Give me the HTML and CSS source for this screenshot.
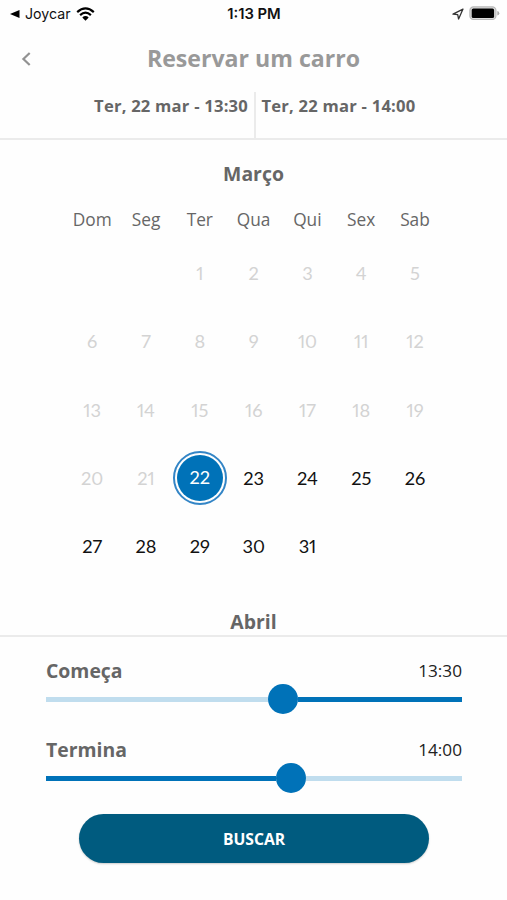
FILE: index.html
```html
<!DOCTYPE html>
<html lang="pt">
<head>
<meta charset="utf-8">
<title>Reservar um carro</title>
<link rel="stylesheet" href="styles.css">
</head>
<body>
<div class="status">
  <div class="status-left">
    <svg width="10" height="8" viewBox="0 0 10 8"><path d="M0 4L9.5 0V8Z" fill="#000"/></svg>
    <span class="back-app">Joycar</span>
    <svg width="19" height="14" viewBox="0 0 19 14"><g fill="none" stroke="#000" stroke-width="2.2"><path d="M1.2 5.1Q9.5 -2.4 17.8 5.1"/><path d="M4.1 8.1Q9.5 3.3 14.9 8.1"/></g><path d="M6.3 10.4Q9.5 7.8 12.7 10.4L9.5 13.7Z"/></svg>
  </div>
  <span class="clock">1:13 PM</span>
  <div class="status-right">
    <svg width="12" height="12" viewBox="0 0 12 12"><path d="M1 6.2L11 1.1L6.6 11L5.7 6.6Z" fill="none" stroke="#333" stroke-width="1.3" stroke-linejoin="round"/></svg>
    <svg width="31" height="15" viewBox="0 0 31 15"><rect x=".9" y=".9" width="26" height="12.6" rx="3.6" fill="#ddd" stroke="#b8b8b8" stroke-width="1.2"/><rect x="2.7" y="2.5" width="22.4" height="9.6" rx="1.6"/><path d="M28.3 5Q30.3 5.5 30.3 7.3T28.3 9.6Z" fill="#aaa"/></svg>
  </div>
</div>
<header class="header">
  <svg class="chevron" width="10" height="16" viewBox="0 0 10 16"><path d="M8.7 2L2.4 8L8.7 14" fill="none" stroke="#929292" stroke-width="2.2"/></svg>
  <h1>Reservar um carro</h1>
</header>
<div class="range">
  <div class="from">Ter, 22 mar - 13:30</div>
  <div class="to">Ter, 22 mar - 14:00</div>
</div>
<main class="calendar">
  <h2>Março</h2>
  <div class="weekdays"><span>Dom</span><span>Seg</span><span>Ter</span><span>Qua</span><span>Qui</span><span>Sex</span><span>Sab</span></div>
  <div class="days">
    <span></span><span></span><span class="past">1</span><span class="past">2</span><span class="past">3</span><span class="past">4</span><span class="past">5</span>
    <span class="past">6</span><span class="past">7</span><span class="past">8</span><span class="past">9</span><span class="past">10</span><span class="past">11</span><span class="past">12</span>
    <span class="past">13</span><span class="past">14</span><span class="past">15</span><span class="past">16</span><span class="past">17</span><span class="past">18</span><span class="past">19</span>
    <span class="past">20</span><span class="past">21</span><span class="selected"><b>22</b></span><span>23</span><span>24</span><span>25</span><span>26</span>
    <span>27</span><span>28</span><span>29</span><span>30</span><span>31</span>
  </div>
  <h2 class="next">Abril</h2>
</main>
<section class="times">
  <div class="time-row"><strong>Começa</strong><span>13:30</span></div>
  <div class="slider"><i class="light start"></i><i class="knob"></i><i class="rest"></i></div>
  <div class="time-row second"><strong>Termina</strong><span>14:00</span></div>
  <div class="slider"><i class="end"></i><i class="knob"></i><i class="light rest"></i></div>
  <button class="search">BUSCAR</button>
</section>
</body>
</html>
```
FILE: styles.css
```css
* { box-sizing: border-box; }
body { margin: 0; width: 507px; height: 900px; overflow: hidden; background: #fefefe; color: #666; font-family: "Open Sans", "Noto Sans", sans-serif; }
svg { display: block; flex: none; }
h1, h2 { margin: 0; font-weight: 700; }
.status { height: 28px; display: grid; grid-template-columns: 1fr auto 1fr; align-items: center; padding: 0 7px 1px 10px; color: #111; font-family: Inter, sans-serif; font-size: 14.2px; }
.status-left { display: flex; align-items: center; }
.back-app { margin: 0 7px 0 5px; width: 44px; white-space: nowrap; }
.clock { font-weight: 600; font-size: 14.8px; padding-right: 2px; }
.status-right { display: flex; justify-content: flex-end; align-items: center; gap: 5px; }
.header { height: 64px; display: grid; grid-template-columns: 32px 1fr 32px; align-items: center; }
.chevron { margin: 0 0 2px 21px; }
.header h1 { text-align: center; font-size: 23.1px; line-height: 32px; color: #999; padding-bottom: 4px; }
.range { height: 48px; display: grid; grid-template-columns: 254px 1fr; border-bottom: 2px solid #ebebeb; font-weight: 700; font-size: 16.6px; letter-spacing: .22px; line-height: 22px; white-space: nowrap; }
.from { text-align: right; padding: 3px 6px 0 0; }
.to { border-left: 2px solid #ebebeb; padding: 3px 0 0 5.5px; }
.calendar { height: 495px; overflow: hidden; }
.calendar h2 { text-align: center; font-size: 19.4px; line-height: 26px; margin-top: 21px; }
.weekdays, .days { width: 376.6px; margin-left: 65.3px; display: grid; grid-template-columns: repeat(7, 1fr); text-align: center; }
.weekdays { margin-top: 20px; font-size: 17.3px; line-height: 26px; height: 26px; }
.days { margin-top: 6px; grid-auto-rows: 68.3px; align-items: center; font-family: Lato, sans-serif; font-size: 18.2px; color: #111; font-variant-numeric: proportional-nums; }
.days > span { line-height: 24px; }
.days .past { color: #d3d3d3; }
.days .selected { width: 54px; height: 54px; border: 2px solid #3385c6; border-radius: 50%; padding: 2px; }
.selected b { display: block; height: 46px; border-radius: 50%; background: #0072b8; color: #fff; font-weight: 400; line-height: 45px; }
.calendar .next { margin-top: 29px; }
.times { border-top: 2px solid #ebebeb; padding: 21px 45px 0 46px; }
.time-row { display: flex; justify-content: space-between; align-items: center; height: 26px; }
.time-row strong { font-size: 19.4px; padding-bottom: 2px; }
.time-row span { color: #222; font-size: 17.2px; padding-bottom: 2px; }
.slider { height: 30px; display: flex; align-items: center; }
.slider i { height: 5px; background: #0072b8; }
.slider .light { background: #c0ddee; }
.slider .knob { width: 30px; height: 30px; border-radius: 50%; }
.slider .start { width: 222px; }
.slider .end { width: 230px; }
.slider .rest { flex: 1; }
.second { margin-top: 23px; }
.search { display: block; width: 350px; height: 49px; margin: 21px 0 0 33px; border: 0; border-radius: 25px; background: #005b7f; color: #fff; font: 700 15.7px "Open Sans", sans-serif; box-shadow: 0 1px 2px #0003; }
```
